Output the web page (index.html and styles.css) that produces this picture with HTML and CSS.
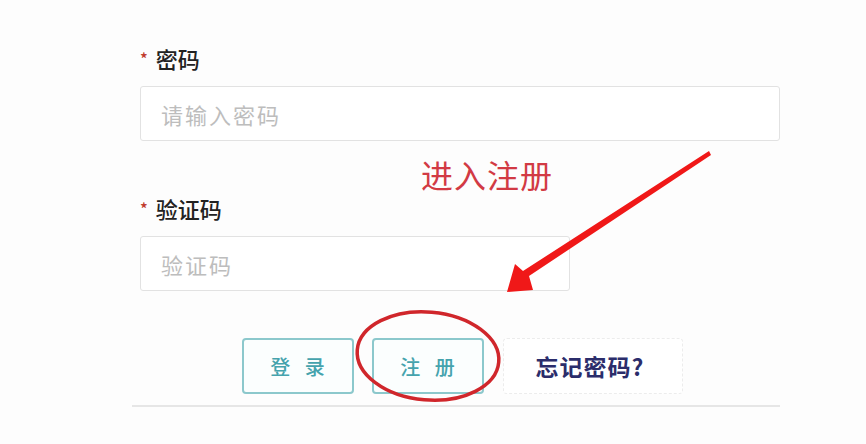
FILE: index.html
```html
<!DOCTYPE html>
<html lang="zh-CN">
<head>
    <meta charset="UTF-8">
    <title>登录</title>
    <link rel="stylesheet" href="styles.css">
</head>
<body>
    <div class="login-form">
        <div class="form-item">
            <label class="form-label"><span class="required">*</span>密码</label>
            <input class="form-input" type="password" placeholder="请输入密码">
        </div>

        <div class="form-item">
            <label class="form-label"><span class="required">*</span>验证码</label>
            <input class="form-input captcha" type="text" placeholder="验证码">
        </div>

        <div class="actions">
            <button class="btn">登 录</button>
            <button class="btn">注 册</button>
            <button class="btn link">忘记密码?</button>
        </div>
    </div>

    <!-- annotation drawn over the screenshot -->
    <div class="note">进入注册</div>
    <svg class="marks" width="866" height="444" viewBox="0 0 866 444">
        <ellipse cx="428" cy="356" rx="71" ry="44" fill="none" stroke="#d0262b" stroke-width="3.5" transform="rotate(5 428 356)"/>
        <polygon points="709,151 711,155 529,276 533,290 507,292 515,264 523,271" fill="#f01818"/>
    </svg>
</body>
</html>
```

FILE: styles.css
```css
body {
    margin: 0;
    background: #fdfdfd;
    font-family: "Noto Sans CJK SC", "Noto Sans", sans-serif;
    color: #222;
}

.login-form {
    width: 648px;
    margin-left: 132px;
    padding-top: 43px;
    border-bottom: 2px solid #e6e6e6;
    padding-bottom: 11px;
}

.form-item {
    padding-left: 8px;
    margin-bottom: 47px;
}

.form-item + .form-item {
    padding-top: 5px;
}

.form-label {
    display: block;
    font-size: 22px;
    line-height: 30px;
    font-weight: 500;
    margin-bottom: 13px;
}

.required {
    color: #c0392b;
    font-size: 16px;
    margin-right: 8px;
    vertical-align: top;
}

.form-input {
    display: block;
    box-sizing: border-box;
    width: 640px;
    height: 55px;
    padding: 0 20px;
    border: 1px solid #e2e2e2;
    border-radius: 3px;
    background: #fff;
    font-family: inherit;
    font-size: 22px;
    letter-spacing: 2px;
}

.form-input::placeholder {
    color: #bdbdbd;
}

.form-input.captcha {
    width: 430px;
}

.actions {
    display: flex;
    gap: 18px;
    padding-left: 110px;
}

.btn {
    width: 112px;
    height: 56px;
    border: 2px solid #8cc8cc;
    border-radius: 4px;
    background: #fbfefe;
    color: #45a3ad;
    font-family: inherit;
    font-size: 20px;
    font-weight: 500;
    letter-spacing: 5px;
    padding-left: 10px;
}

.btn.link {
    width: 180px;
    margin-left: 1px;
    border: 1px dashed #ececec;
    background: #fff;
    color: #2b2d6b;
    letter-spacing: 1px;
    padding-left: 0;
    font-size: 23px;
    font-weight: 600;
}

.note {
    position: absolute;
    left: 421px;
    top: 152px;
    color: #d23a44;
    font-size: 32px;
    letter-spacing: 1px;
    line-height: 44px;
}

.marks {
    position: absolute;
    left: 0;
    top: 0;
}
```
